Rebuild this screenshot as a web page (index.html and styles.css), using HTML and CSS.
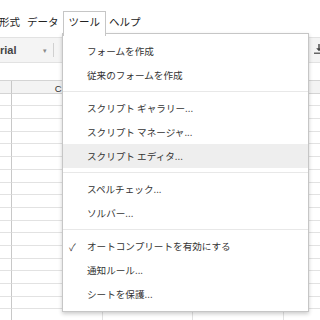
FILE: index.html
```html
<!DOCTYPE html>
<html lang="ja">
<head>
  <meta charset="UTF-8">
  <title>ツール メニュー</title>
  <link rel="stylesheet" href="styles.css">
</head>
<body>
  <div class="menubar">
    <div class="menu-title first">形式</div>
    <div class="menu-title">データ</div>
    <div class="menu-title open">ツール</div>
    <div class="menu-title">ヘルプ</div>
  </div>

  <div class="toolbar">
    <div class="font-name">Arial</div>
    <div class="caret">▾</div>
    <div class="tb-sep"></div>
    <svg class="tb-icon" width="12" height="12" viewBox="0 0 12 12">
      <path d="M6 1 V7" stroke="#444" stroke-width="1.4" fill="none"/>
      <path d="M3.2 5.2 L6 8.2 L8.8 5.2 Z" fill="#444"/>
      <rect x="1" y="9.6" width="10" height="1.2" fill="#444"/>
    </svg>
  </div>

  <div class="formula-bar"></div>

  <div class="sheet">
    <div class="cell head rownum"></div>
    <div class="cell head">C</div>
    <div class="cell head">D</div>
    <div class="cell head">E</div>
    <div class="cell head"></div>
  </div>
  <div class="sheet rows" id="rows"></div>

  <div class="dropdown">
    <div class="item"><span class="check"></span>フォームを作成</div>
    <div class="item"><span class="check"></span>従来のフォームを作成</div>
    <div class="sep"></div>
    <div class="item"><span class="check"></span>スクリプト ギャラリー...</div>
    <div class="item"><span class="check"></span>スクリプト マネージャ...</div>
    <div class="item hover"><span class="check"></span>スクリプト エディタ...</div>
    <div class="sep"></div>
    <div class="item"><span class="check"></span>スペルチェック...</div>
    <div class="item"><span class="check"></span>ソルバー...</div>
    <div class="sep"></div>
    <div class="item"><span class="check">✓</span>オートコンプリートを有効にする</div>
    <div class="item"><span class="check"></span>通知ルール...</div>
    <div class="item"><span class="check"></span>シートを保護...</div>
  </div>

  <script>
    // fill the grid body with empty cells
    const rows = document.getElementById('rows');
    for (let r = 0; r < 18; r++) {
      for (let c = 0; c < 5; c++) {
        const cell = document.createElement('div');
        cell.className = c === 0 ? 'cell rownum' : 'cell';
        rows.appendChild(cell);
      }
    }
  </script>
</body>
</html>
```

FILE: styles.css
```css
body {
  margin: 0;
  width: 320px;
  height: 320px;
  overflow: hidden;
  position: relative;
  background: #fff;
  font-family: "Noto Sans CJK JP", "Noto Sans", sans-serif;
  color: #333;
}
.menubar {
  display: flex;
  align-items: flex-start;
  height: 37px;
  padding-top: 11px;
  box-sizing: border-box;
  margin-left: -4.5px;
  font-size: 10.5px;
}
.menu-title {
  padding: 1px 3.5px 0;
  line-height: 20px;
  color: #222;
}
.menu-title.open {
  position: relative;
  z-index: 3;
  height: 22px;
  padding: 0 4.5px 2px 5px;
  margin-left: 0.5px;
  background: #fff;
  border: 1px solid #c6c6c6;
  border-bottom: none;
}
.toolbar {
  display: flex;
  align-items: center;
  height: 26px;
  box-sizing: border-box;
  background: #f4f4f4;
  border-top: 1px solid #e2e2e2;
  border-bottom: 1px solid #e2e2e2;
}
.font-name {
  margin-left: -8px;
  font-family: "Liberation Sans", Arial, sans-serif;
  font-weight: bold;
  font-size: 11px;
  color: #444;
}
.caret {
  margin-left: 27px;
  font-size: 7px;
  color: #888;
}
.tb-sep {
  width: 1px;
  height: 14px;
  margin-left: 6px;
  background: #d0d0d0;
}
.tb-icon {
  margin-left: auto;
  margin-right: -5px;
  margin-top: -2px;
}
.formula-bar {
  height: 17px;
  border-bottom: 1px solid #d4d4d4;
}
.sheet {
  display: grid;
  grid-template-columns: 12px 90.5px 90.5px 90.5px 90.5px;
  grid-auto-rows: 12.7px;
}
.sheet:first-of-type {
  grid-auto-rows: 17px;
}
.cell {
  box-sizing: border-box;
  border-right: 1px solid #e2e2e2;
  border-bottom: 1px solid #e2e2e2;
}
.cell.rownum {
  border-right-color: #c8c8c8;
}
.cell.head {
  background: #f3f3f3;
  border-bottom-color: #d4d4d4;
  font-family: "Liberation Sans", Arial, sans-serif;
  font-size: 9.5px;
  color: #333;
  text-align: center;
  line-height: 16px;
  padding-left: 3px;
}
.dropdown {
  position: absolute;
  z-index: 2;
  top: 33px;
  left: 62px;
  width: 247px;
  box-sizing: border-box;
  padding: 5px 0 5px;
  background: #fff;
  border: 1px solid #c6c6c6;
  box-shadow: 0 2px 4px rgba(0, 0, 0, 0.2);
  font-size: 9.6px;
}
.item {
  display: flex;
  align-items: center;
  height: 24px;
  padding-left: 6px;
  color: #333;
  white-space: nowrap;
}
.item.hover {
  background: #eeeeee;
}
.check {
  width: 18px;
  flex: none;
  font-size: 10px;
  color: #444;
}
.sep {
  height: 1px;
  margin: 4px 0;
  background: #e8e8e8;
}
```
